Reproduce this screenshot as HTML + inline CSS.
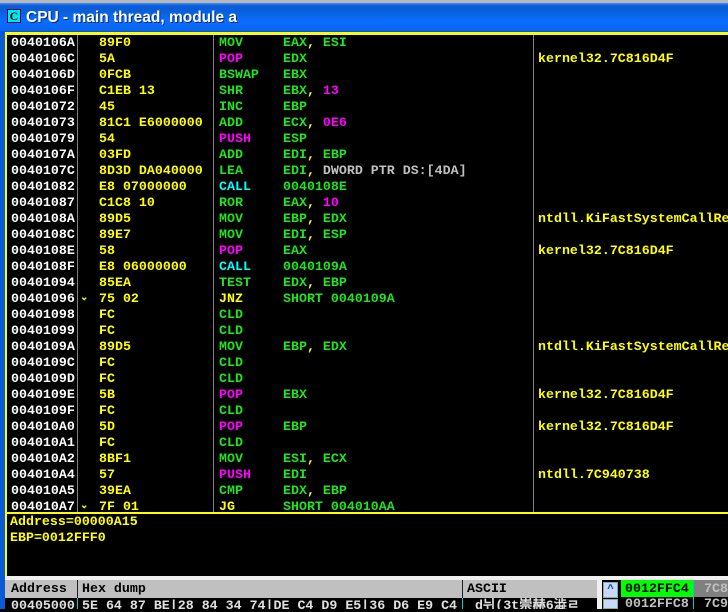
<!DOCTYPE html>
<html><head><meta charset="utf-8"><style>
*{margin:0;padding:0;box-sizing:border-box}
body{width:728px;height:609px;overflow:hidden;background:#000;position:relative;font-family:"Liberation Mono",monospace;font-weight:bold;font-size:13.3px}
.a{position:absolute;white-space:pre}
.r{position:absolute;left:0;height:16px;line-height:16px;width:728px;white-space:pre}
.r span{position:absolute;top:0}
.ad{left:11px;color:#fff}.hx{left:99px;color:#ffff00}.mn{left:219px;color:#1fe51f}.op{left:283px;color:#1fe51f}.cm{left:538px;color:#ffff00}
.m{color:#ff00ff!important}.c{color:#00ffff!important}.y{color:#ffff00!important}.g{color:#c0c0c0}.yy{color:#ffff00}.mg{color:#ff00ff}
.j{position:absolute;left:80px;color:#ffff00;font-size:10px;top:3px}
</style></head><body>
<div class="a" style="left:0;top:0;width:728px;height:3px;background:#b8b8b8"></div>
<div class="a" style="left:0;top:3px;width:728px;height:30px;background:linear-gradient(#3c8cff 0,#0a5ad8 3px,#0860d8 8px,#0a6cff 18px,#0a66f0 27px,#0050d0 30px)"></div>
<div class="a" style="left:7px;top:9px;width:14px;height:14px;background:#00e8e8;border:1px solid #005;font-family:'Liberation Serif',serif;font-size:12px;color:#000;text-align:center;line-height:12px">C</div>
<div class="a" style="left:26px;top:9px;color:#fff;font-family:'Liberation Sans',sans-serif;font-size:15.5px;text-shadow:1px 1px #0a2a80">CPU - main thread, module a</div>
<div class="a" style="left:0;top:33px;width:5px;height:576px;background:#0a5ad8"></div>
<div class="a" style="left:5px;top:32px;width:723px;height:3px;background:#ffff00"></div>
<div class="a" style="left:5px;top:32px;width:2px;height:545px;background:#ffff00"></div>
<div class="a" style="left:77px;top:35px;width:1px;height:477px;background:#808080"></div>
<div class="a" style="left:213px;top:35px;width:1px;height:477px;background:#808080"></div>
<div class="a" style="left:533px;top:35px;width:1px;height:477px;background:#808080"></div>

<div class="r" style="top:35px"><span class="ad">0040106A</span><span class="hx">89F0</span><span class="mn">MOV</span><span class="op">EAX<b class="yy">,</b> ESI</span></div>
<div class="r" style="top:51px"><span class="ad">0040106C</span><span class="hx">5A</span><span class="mn m">POP</span><span class="op">EDX</span><span class="cm">kernel32.7C816D4F</span></div>
<div class="r" style="top:67px"><span class="ad">0040106D</span><span class="hx">0FCB</span><span class="mn">BSWAP</span><span class="op">EBX</span></div>
<div class="r" style="top:83px"><span class="ad">0040106F</span><span class="hx">C1EB 13</span><span class="mn">SHR</span><span class="op">EBX<b class="yy">,</b> <b class="mg">13</b></span></div>
<div class="r" style="top:99px"><span class="ad">00401072</span><span class="hx">45</span><span class="mn">INC</span><span class="op">EBP</span></div>
<div class="r" style="top:115px"><span class="ad">00401073</span><span class="hx">81C1 E6000000</span><span class="mn">ADD</span><span class="op">ECX<b class="yy">,</b> <b class="mg">0E6</b></span></div>
<div class="r" style="top:131px"><span class="ad">00401079</span><span class="hx">54</span><span class="mn m">PUSH</span><span class="op">ESP</span></div>
<div class="r" style="top:147px"><span class="ad">0040107A</span><span class="hx">03FD</span><span class="mn">ADD</span><span class="op">EDI<b class="yy">,</b> EBP</span></div>
<div class="r" style="top:163px"><span class="ad">0040107C</span><span class="hx">8D3D DA040000</span><span class="mn">LEA</span><span class="op">EDI<b class="yy">,</b> <b class="g">DWORD PTR DS:[4DA]</b></span></div>
<div class="r" style="top:179px"><span class="ad">00401082</span><span class="hx">E8 07000000</span><span class="mn c">CALL</span><span class="op">0040108E</span></div>
<div class="r" style="top:195px"><span class="ad">00401087</span><span class="hx">C1C8 10</span><span class="mn">ROR</span><span class="op">EAX<b class="yy">,</b> <b class="mg">10</b></span></div>
<div class="r" style="top:211px"><span class="ad">0040108A</span><span class="hx">89D5</span><span class="mn">MOV</span><span class="op">EBP<b class="yy">,</b> EDX</span><span class="cm">ntdll.KiFastSystemCallRe</span></div>
<div class="r" style="top:227px"><span class="ad">0040108C</span><span class="hx">89E7</span><span class="mn">MOV</span><span class="op">EDI<b class="yy">,</b> ESP</span></div>
<div class="r" style="top:243px"><span class="ad">0040108E</span><span class="hx">58</span><span class="mn m">POP</span><span class="op">EAX</span><span class="cm">kernel32.7C816D4F</span></div>
<div class="r" style="top:259px"><span class="ad">0040108F</span><span class="hx">E8 06000000</span><span class="mn c">CALL</span><span class="op">0040109A</span></div>
<div class="r" style="top:275px"><span class="ad">00401094</span><span class="hx">85EA</span><span class="mn">TEST</span><span class="op">EDX<b class="yy">,</b> EBP</span></div>
<div class="r" style="top:291px"><span class="ad">00401096</span><span class="j">⌄</span><span class="hx">75 02</span><span class="mn y">JNZ</span><span class="op">SHORT 0040109A</span></div>
<div class="r" style="top:307px"><span class="ad">00401098</span><span class="hx">FC</span><span class="mn">CLD</span></div>
<div class="r" style="top:323px"><span class="ad">00401099</span><span class="hx">FC</span><span class="mn">CLD</span></div>
<div class="r" style="top:339px"><span class="ad">0040109A</span><span class="hx">89D5</span><span class="mn">MOV</span><span class="op">EBP<b class="yy">,</b> EDX</span><span class="cm">ntdll.KiFastSystemCallRe</span></div>
<div class="r" style="top:355px"><span class="ad">0040109C</span><span class="hx">FC</span><span class="mn">CLD</span></div>
<div class="r" style="top:371px"><span class="ad">0040109D</span><span class="hx">FC</span><span class="mn">CLD</span></div>
<div class="r" style="top:387px"><span class="ad">0040109E</span><span class="hx">5B</span><span class="mn m">POP</span><span class="op">EBX</span><span class="cm">kernel32.7C816D4F</span></div>
<div class="r" style="top:403px"><span class="ad">0040109F</span><span class="hx">FC</span><span class="mn">CLD</span></div>
<div class="r" style="top:419px"><span class="ad">004010A0</span><span class="hx">5D</span><span class="mn m">POP</span><span class="op">EBP</span><span class="cm">kernel32.7C816D4F</span></div>
<div class="r" style="top:435px"><span class="ad">004010A1</span><span class="hx">FC</span><span class="mn">CLD</span></div>
<div class="r" style="top:451px"><span class="ad">004010A2</span><span class="hx">8BF1</span><span class="mn">MOV</span><span class="op">ESI<b class="yy">,</b> ECX</span></div>
<div class="r" style="top:467px"><span class="ad">004010A4</span><span class="hx">57</span><span class="mn m">PUSH</span><span class="op">EDI</span><span class="cm">ntdll.7C940738</span></div>
<div class="r" style="top:483px"><span class="ad">004010A5</span><span class="hx">39EA</span><span class="mn">CMP</span><span class="op">EDX<b class="yy">,</b> EBP</span></div>
<div class="r" style="top:499px"><span class="ad">004010A7</span><span class="j">⌄</span><span class="hx">7F 01</span><span class="mn y">JG</span><span class="op">SHORT 004010AA</span></div>

<div class="a" style="left:5px;top:512px;width:723px;height:2px;background:#ffff00"></div>
<div class="a" style="left:10px;top:514px;line-height:16px;color:#ffff00">Address=00000A15<br>EBP=0012FFF0</div>

<div class="a" style="left:5px;top:576px;width:723px;height:4px;background:#f0f0f0"></div>
<div class="a" style="left:5px;top:580px;width:592px;height:18px;background:#c0c0c0;color:#000;line-height:18px"><span class="a" style="left:6px">Address</span><span class="a" style="left:72px;top:0;width:1px;height:18px;background:#222"></span><span class="a" style="left:77px">Hex dump</span><span class="a" style="left:457px;top:0;width:1px;height:18px;background:#222"></span><span class="a" style="left:462px">ASCII</span></div>
<div class="a" style="left:597px;top:580px;width:5px;height:29px;background:#f0f0f0"></div>
<div class="a" style="left:5px;top:598px;width:592px;height:11px;color:#e0e0e0;line-height:16px;overflow:hidden"><span class="a" style="left:6px">00405000</span><span class="a" style="left:72px;top:0;width:1px;height:11px;background:#0cc"></span><span class="a" style="left:77px">5E 64 87 BE|28 84 34 74|DE C4 D9 E5|36 D6 E9 C4</span><span class="a" style="left:457px;top:0;width:1px;height:11px;background:#0cc"></span><span class="a" style="left:470px">d뉘(3t崇赫6澁ㄹ</span></div>
<div class="a" style="left:603px;top:582px;width:15px;height:16px;background:#c8d8f8;border:1px solid #8aa;color:#1040a0;font-size:11px;text-align:center;line-height:14px">^</div>
<div class="a" style="left:603px;top:599px;width:15px;height:10px;background:#c8d8f8;border:1px solid #8aa"></div>
<div class="a" style="left:621px;top:580px;width:72px;height:17px;background:#00ff00;color:#000;line-height:17px;padding-left:4px">0012FFC4</div>
<div class="a" style="left:693px;top:580px;width:1px;height:29px;background:#0cc"></div>
<div class="a" style="left:694px;top:580px;width:34px;height:17px;background:#808080;color:#c0c0c0;line-height:17px;padding-left:10px">7C8</div>
<div class="a" style="left:625px;top:596px;color:#c0c0c0;line-height:16px">0012FFC8</div>
<div class="a" style="left:704px;top:596px;color:#c0c0c0;line-height:16px">7C9</div>
</body></html>
